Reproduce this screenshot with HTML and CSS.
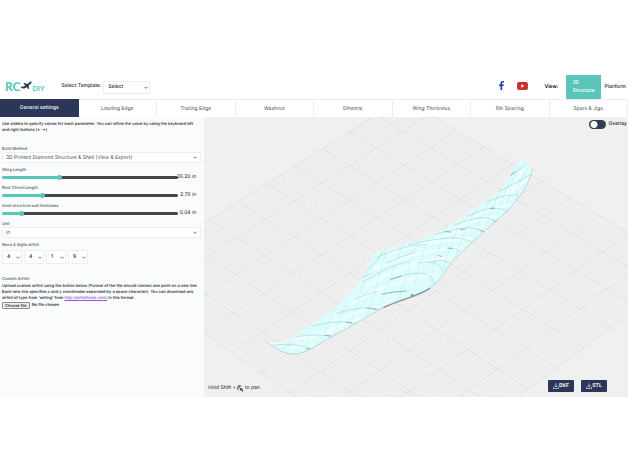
FILE: index.html
```html
<!DOCTYPE html>
<html lang="en">
<head>
<meta charset="utf-8">
<title>RC DIY</title>
<link rel="stylesheet" href="styles.css">
</head>
<body>
<svg class="defs" width="0" height="0" aria-hidden="true">
  <symbol id="chevron" viewBox="0 0 10 6"><path d="M1 1l4 4 4-4" fill="none" stroke="#3c424c" stroke-width="1.800"/></symbol>
  <symbol id="download" viewBox="0 0 16 16"><path d="M8 1v9M4.500 7L8 10.500 11.500 7M1 10v4.500h14V10" fill="none" stroke="#fff" stroke-width="1.700"/></symbol>
</svg>

<header class="header">
  <a class="logo" href="#">
    <span class="logo-rc">RC</span>
    <svg class="logo-plane" viewBox="0 0 33 30" aria-hidden="true">
      <path d="M0 17C6 18 9 17 13 13L7 8l3-2 10 3 6-6c3-2 6-2 6 0s-2 5-5 7l-4 4 1 9-3 1-4-6c-5 5-11 6-17 2z" fill="#2b3658"/>
    </svg>
    <span class="logo-diy">DIY</span>
  </a>
  <div class="template">
    <label for="template">Select Template:</label>
    <div class="select template-select">
      <select id="template"><option>Select</option></select>
      <svg class="chevron"><use href="#chevron"/></svg>
    </div>
  </div>
  <nav class="social">
    <a href="#" aria-label="Facebook"><svg class="fb" viewBox="0 0 12 22"><path d="M3.500 22V12.500H0V8.500h3.500V5.500C3.500 2 5.500 0 8.700 0L12 .3v3.500H9.800C8 3.800 7.700 4.700 7.700 6v2.500h4l-.6 4H7.700V22z" fill="#1f3fae"/></svg></a>
    <a href="#" aria-label="YouTube"><svg class="yt" viewBox="0 0 34 25"><rect width="34" height="25" rx="6" fill="#cb2f2b"/><path d="M13 7l10 5.500L13 18z" fill="#fff"/></svg></a>
  </nav>
  <div class="views">
    <span class="views-label">View:</span>
    <button class="view active">3D Structure</button>
    <button class="view">Planform</button>
  </div>
</header>

<nav class="tabs">
  <button class="tab active">General settings</button>
  <button class="tab">Leading Edge</button>
  <button class="tab">Trailing Edge</button>
  <button class="tab">Washout</button>
  <button class="tab">Dihedral</button>
  <button class="tab">Wing Thickness</button>
  <button class="tab">Rib Spacing</button>
  <button class="tab">Spars &amp; Jigs</button>
</nav>

<main class="main">
  <section class="panel">
    <p class="intro">Use sliders to specify values for each parameter. You can refine the value by using the keyboard left and right buttons [← →]</p>

    <div class="field">
      <label for="method">Build Method</label>
      <div class="select">
        <select id="method"><option>3D Printed Diamond Structure &amp; Shell (View &amp; Export)</option></select>
        <svg class="chevron"><use href="#chevron"/></svg>
      </div>
    </div>

    <div class="field">
      <label for="length">Wing Length</label>
      <div class="slider"><input id="length" type="range" min="0" max="100" value="32" style="--fill:32%"><output for="length">26.20 in</output></div>
    </div>
    <div class="field">
      <label for="chord">Root Chord Length</label>
      <div class="slider"><input id="chord" type="range" min="0" max="100" value="22" style="--fill:22%"><output for="chord">2.76 in</output></div>
    </div>
    <div class="field">
      <label for="wall">Inner structure wall thickness</label>
      <div class="slider"><input id="wall" type="range" min="0" max="100" value="10" style="--fill:10%"><output for="wall">0.04 in</output></div>
    </div>

    <div class="field">
      <label for="unit">Unit</label>
      <div class="select">
        <select id="unit"><option>in</option></select>
        <svg class="chevron"><use href="#chevron"/></svg>
      </div>
    </div>

    <fieldset class="field">
      <legend>Naca 4 digits airfoil</legend>
      <div class="digits">
        <div class="select digit"><select aria-label="Digit 1"><option>4</option></select><svg class="chevron"><use href="#chevron"/></svg></div>
        <div class="select digit"><select aria-label="Digit 2"><option>4</option></select><svg class="chevron"><use href="#chevron"/></svg></div>
        <div class="select digit"><select aria-label="Digit 3"><option>1</option></select><svg class="chevron"><use href="#chevron"/></svg></div>
        <div class="select digit"><select aria-label="Digit 4"><option>9</option></select><svg class="chevron"><use href="#chevron"/></svg></div>
      </div>
    </fieldset>

    <div class="custom">
      <h2>Custom Airfoil</h2>
      <p>Upload custom airfoil using the button below (Format of the file should contain one point on a new line. Each new line specifies x and y coordinates separated by a space character). You can download any airfoil of type from 'selling' from <a href="#">http://airfoiltools.com/</a> in this format.</p>
      <label class="file"><input type="file"><span class="file-button">Choose file</span><span>No file chosen</span></label>
    </div>
  </section>

  <section class="stage">
    <svg class="scene" viewBox="12 6 1272 840" preserveAspectRatio="xMidYMid slice" role="img" aria-label="Wing model">
      <defs>
        <clipPath id="wing"><path id="outline" d="M962 135L998 160C992 190 975 225 950 255C930 285 905 302 850 352L765 430C735 465 720 500 690 520C650 545 600 555 560 573C500 602 450 640 400 662C350 690 320 717 280 717C250 717 235 705 195 678C225 686 255 686 290 660C330 636 360 610 400 580C440 550 462 525 480 495C500 465 508 440 527 412L560 402L640 380C720 355 780 315 830 275C860 255 885 240 900 225C925 195 940 160 962 135z"/></clipPath>
      </defs>
      <path id="minor" class="minor"/>
      <path id="major" class="major"/>
      <use href="#outline" class="wing-fill"/>
      <g clip-path="url(#wing)">
        <path class="shine" d="M920 235L975 160M875 268Q930 240 985 190M800 318Q860 280 930 270M740 350Q830 312 895 305M690 380Q780 340 855 336M560 418Q680 375 820 370M520 465Q640 405 790 398M500 515Q590 450 750 425M450 570Q530 510 705 475M390 625Q470 580 600 565M320 675Q400 640 490 607M225 692Q290 665 410 650M190 680Q260 705 340 690"/>
        <path class="cross" d="M320 715Q320 680 340 630M345 700Q385 650 400 575M400 662Q430 600 445 540M450 635Q475 560 500 460M500 600Q530 520 560 400M540 580Q570 480 610 385M595 560Q620 460 660 365M640 540Q650 440 700 350M690 520Q700 420 745 330M730 470Q740 400 790 310M765 430Q790 350 835 270M815 385Q840 310 870 250M850 350Q880 280 900 220M888 320Q900 260 935 190M922 285Q925 225 955 150M950 255Q950 200 990 150M260 715Q265 685 285 665M220 700Q290 670 330 640"/>
        <path class="rib" d="M930 184L975 150M895 230Q930 215 992 178M860 260Q910 238 955 240M800 305Q880 265 922 288M760 332Q850 292 888 320M700 360Q815 322 851 352M625 390Q770 353 815 382M525 430Q610 390 680 388M560 445Q600 425 645 412M740 400Q765 395 780 410M490 500Q570 450 630 438M690 440Q730 432 752 445M650 445Q715 430 730 470M570 495Q630 470 670 475Q705 483 700 510M500 465Q535 440 548 410M465 553Q500 535 532 530M410 595Q490 570 538 583M340 632Q430 610 470 627M290 665Q350 655 400 665M215 690Q305 685 335 704M245 703L270 685M480 490L515 475"/>
        <path class="accent" d="M545 538Q575 530 620 528M572 493L605 483M500 579L530 583M438 622L455 624M375 661L392 663M320 700L332 703M715 421L726 425M745 399L758 402M839 345L852 350M880 317L890 321M870 280L885 279M780 345L795 343M735 350L755 351M933 180L945 169"/>
      </g>
      <path class="edge" d="M998 160C992 190 975 225 950 255C930 285 905 302 850 352L765 430C735 465 720 500 690 520M560 573C500 602 450 640 400 662C350 690 320 717 280 717C250 717 235 705 195 678"/>
      <path class="spar" d="M690 520C650 545 600 555 550 578M632 540h8"/>
    </svg>
    <div class="overlay">
      <label class="toggle"><input type="checkbox" role="switch"><span>Overlay</span></label>
      <div class="footer">
        <p class="hint">Hold Shift +
          <svg class="mouse" viewBox="0 0 20 20" aria-hidden="true"><path d="M2 8V6c0-3 2-5 5-5s5 2 5 5M2 8h5V1M2 8v3c0 2 1 3 3 3" fill="none" stroke="#222" stroke-width="1.800"/><path d="M9 8l9 4-4 1 4 5-2 1-4-5-2 3z" fill="#222"/></svg>
          to pan</p>
        <div class="exports">
          <button class="export"><svg><use href="#download"/></svg>DXF</button>
          <button class="export"><svg><use href="#download"/></svg>STL</button>
        </div>
      </div>
    </div>
  </section>
</main>
<script src="script.js"></script>
</body>
</html>
```
FILE: styles.css
```css
* { box-sizing: border-box; }
body {
  margin: 0;
  padding-top: 75px;
  background: #fff;
  color: #222529;
  font: 5px/6px Inter, "Liberation Sans", sans-serif;
  text-rendering: geometricPrecision;
}
p, h2 { margin: 0; }
button, select, input { font: inherit; color: inherit; text-rendering: inherit; }
button { border: 0; padding: 0; background: none; }
svg { display: block; }
.defs { position: absolute; }

.header { display: flex; align-items: center; height: 24px; }
.logo {
  display: flex;
  align-items: flex-end;
  margin-left: 5px;
  color: #4cc3b5;
  text-decoration: none;
  font-family: Lato, sans-serif;
}
.logo-rc { font-size: 12px; line-height: 12px; font-weight: 700; }
.logo-diy { margin-left: 1px; font-size: 7px; line-height: 8px; font-weight: 700; }
.logo-plane { width: 11px; height: 10px; margin-bottom: 2px; }
.template { display: flex; align-items: center; gap: 2px; margin-left: 17px; font-weight: 500; }
.template label { padding-bottom: 2px; }

.select { display: grid; align-items: center; height: 11px; background: #fff; border: 1px solid #eceef1; border-radius: 1px; }
.select > * { grid-area: 1 / 1; }
.select select { appearance: none; width: 100%; height: 100%; padding: 0 3px; border: 0; background: none; color: #4a4f59; font-size: 5px; }
.chevron { width: 4px; height: 3px; justify-self: end; margin-right: 3px; pointer-events: none; }
.template-select { width: 47px; height: 13px; }
.template-select select { padding-left: 4px; color: #222529; font-weight: 500; }
.template-select .chevron { margin-right: 1px; }

.social { display: flex; align-items: center; gap: 13px; margin-left: auto; padding-bottom: 3px; }
.fb { width: 5px; height: 9px; }
.yt { width: 11px; height: 8px; }
.views { display: flex; align-items: center; align-self: stretch; margin-left: 17px; font-weight: 500; }
.views-label { font-weight: 700; margin-right: 8px; }
.view { height: 24px; padding: 0 3px; }
.view.active { width: 35px; padding: 0 6px; background: #5cc5ba; color: #fff; text-align: left; line-height: 8px; }
.view:last-child { padding-right: 2px; }

.tabs { display: grid; grid-template-columns: repeat(8, 1fr); height: 18px; border-top: 1px solid #eee; }
.tab { border-right: 1px solid #eee; color: #4e5460; }
.tab.active { background: #2b3658; color: #fff; font-weight: 500; margin-top: -1px; border: 0; }

.main { display: grid; grid-template-columns: 13fr 27fr; }
.panel { padding: 4px 3px 8px 2px; background: #f9fbfd; font-size: 4px; }
.intro { margin-bottom: 13px; font-weight: 500; }
.field { margin: 0 0 4px; padding: 0; border: 0; min-width: 0; }
.field label, .field legend, .custom h2 { display: block; padding: 0; color: #565c69; font-size: 4px; line-height: 6px; font-weight: 500; }
.slider { display: grid; grid-template-columns: 1fr 18px; align-items: center; height: 8px; padding-right: 5px; }
.slider output { display: flex; justify-content: flex-end; font-size: 5px; white-space: nowrap; }
.slider input {
  appearance: none;
  width: 100%;
  height: 3px;
  margin: 0;
  border-radius: 2px;
  background: linear-gradient(to right, #5cc5ba var(--fill), #454545 var(--fill));
}
.slider input::-webkit-slider-thumb { appearance: none; width: 5px; height: 5px; border-radius: 50%; background: #5cc5ba; }
.digits { display: flex; gap: 2px; padding-top: 2px; }
.digit { width: 20px; height: 14px; font-size: 5px; }
.digit select { padding-left: 4px; color: #222529; font-weight: 500; }
.digit .chevron { margin-right: 1px; }
.custom { padding-top: 8px; font-weight: 500; }
.custom h2 { margin-bottom: 1px; }
.custom a { color: #a44ee0; }
.file { display: flex; align-items: center; gap: 2px; height: 8px; font-weight: 500; }
.file input { position: absolute; width: 1px; height: 1px; opacity: 0; }
.file-button { padding: 0 2px; border: 1px solid #8c8c8c; border-radius: 1px; background: #efefef; line-height: 5px; }

.stage { display: grid; min-height: 280px; background: #f0f0f0; overflow: hidden; }
.stage > * { grid-area: 1 / 1; }
.scene { width: 100%; height: 100%; }
.minor { fill: none; stroke: #e8e8e8; stroke-width: 1; }
.major { fill: none; stroke: #dcdcdc; stroke-width: 2; }
.wing-fill { fill: #ddfdfd; }
.shine { fill: none; stroke: #fafefe; stroke-width: 8; opacity: .7; }
.cross { fill: none; stroke: #c6eeed; stroke-width: 2; }
.rib { fill: none; stroke: #a6d5d3; stroke-width: 2; }
.accent { fill: none; stroke: #6f9896; stroke-width: 2; }
.edge { fill: none; stroke: #a4c6c5; stroke-width: 2; }
.spar { fill: none; stroke: #7d9492; stroke-width: 4; }
.overlay { display: flex; flex-direction: column; justify-content: space-between; align-items: stretch; padding: 3px 1px 5px 4px; }
.toggle { display: flex; align-items: center; align-self: flex-end; gap: 3px; font-weight: 500; line-height: 9px; }
.toggle input {
  appearance: none;
  width: 17px;
  height: 9px;
  margin: 0;
  border-radius: 5px;
  background: radial-gradient(circle at 5px 50%, #fff 3px, #353e50 4px);
}
.footer { display: flex; align-items: center; justify-content: space-between; padding-right: 20px; }
.hint { display: flex; align-items: center; gap: 1px; padding-top: 4px; }
.mouse { width: 7px; height: 7px; }
.exports { display: flex; gap: 7px; }
.export { display: flex; align-items: center; justify-content: center; width: 26px; height: 12px; border-radius: 1px; background: #2b3658; color: #fff; font-weight: 700; }
.export svg { width: 6px; height: 6px; }
```
FILE: script.js
```js
// Ground plane: a square grid seen in perspective, given by its four corners.
const top_ = [607, -50], right = [1468, 463], bottom = [635, 1083], left = [-239, 483];

function project(u, v) {
  const [x0, y0] = top_, [x1, y1] = right, [x2, y2] = bottom, [x3, y3] = left;
  const dx1 = x1 - x2, dx2 = x3 - x2, sx = x0 - x1 + x2 - x3;
  const dy1 = y1 - y2, dy2 = y3 - y2, sy = y0 - y1 + y2 - y3;
  const det = dx1 * dy2 - dx2 * dy1;
  const g = (sx * dy2 - dx2 * sy) / det, h = (dx1 * sy - sx * dy1) / det;
  const w = g * u + h * v + 1;
  return [
    ((x1 - x0 + g * x1) * u + (x3 - x0 + h * x3) * v + x0) / w,
    ((y1 - y0 + g * y1) * u + (y3 - y0 + h * y3) * v + y0) / w
  ].map(n => n.toFixed(1)).join(" ");
}

function lines(count) {
  let d = "";
  for (let i = 0; i <= count; i++) {
    const t = i / count;
    d += `M${project(t, 0)}L${project(t, 1)}M${project(0, t)}L${project(1, t)}`;
  }
  return d;
}

document.getElementById("minor").setAttribute("d", lines(100));
document.getElementById("major").setAttribute("d", lines(10));
```
